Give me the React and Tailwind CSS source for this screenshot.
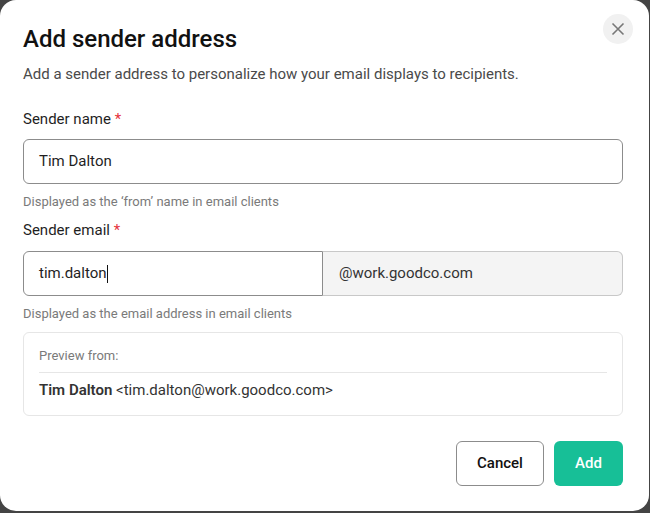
import React from 'react';

const Label = ({ children }) => (
  <div className="h-[20px] text-[15px] leading-[20px] text-[#1f1f1f]">
    {children} <span className="text-[#e5343d]">*</span>
  </div>
);

const Help = ({ children }) => (
  <div className="mt-[9px] h-[18px] text-[13px] leading-[18px] text-[#7a7a7a]">{children}</div>
);

export default function App() {
  return (
    <div className="h-[513px] w-[650px] bg-[#444444] overflow-hidden font-['Roboto',sans-serif]">
      <div className="relative h-[511px] w-[649px] rounded-[16px] bg-white pl-[23px] pr-[26px] pt-[24px]">
        <button className="absolute right-[16px] top-[14px] flex h-[30px] w-[30px] items-center justify-center rounded-full bg-[#f1f1f1]">
          <svg width="14" height="14" viewBox="0 0 14 14" fill="none" stroke="#777777" strokeWidth="1.6">
            <path d="M1.5 1.5 12.5 12.5M12.5 1.5 1.5 12.5" />
          </svg>
        </button>

        <h1 className="h-[30px] text-[24px] leading-[30px] font-medium text-[#111111]">Add sender address</h1>
        <p className="mt-[9px] h-[22px] text-[15px] leading-[22px] text-[#4a4a4a]">
          Add a sender address to personalize how your email displays to recipients.
        </p>

        <div className="mt-[24px]">
          <Label>Sender name</Label>
        </div>
        <div className="mt-[10px] flex h-[45px] items-center rounded-[6px] border border-[#8c8c8c] px-[15px] text-[15px] text-[#1f1f1f]">
          Tim Dalton
        </div>
        <Help>Displayed as the ‘from’ name in email clients</Help>

        <div className="mt-[9px]">
          <Label>Sender email</Label>
        </div>
        <div className="mt-[11px] flex h-[45px]">
          <div className="flex w-[300px] items-center rounded-l-[6px] border border-[#8c8c8c] px-[15px] text-[15px] text-[#1f1f1f]">
            tim.dalton
            <span className="h-[18px] w-px bg-[#111111]"></span>
          </div>
          <div className="flex flex-1 items-center rounded-r-[6px] border border-l-0 border-[#c8c8c8] bg-[#f4f4f4] pl-[16px] text-[15px] text-[#333333]">
            @work.goodco.com
          </div>
        </div>
        <Help>Displayed as the email address in email clients</Help>

        <div className="mt-[9px] h-[84px] rounded-[6px] border border-[#e6e6e6] px-[15px] pt-[14px]">
          <div className="h-[17px] text-[13px] leading-[17px] text-[#7a7a7a]">Preview from:</div>
          <div className="mt-[8px] border-t border-[#e6e6e6] pt-[7px] text-[15px] leading-[20px] text-[#333333]">
            <span className="font-semibold">Tim Dalton</span> &lt;tim.dalton@work.goodco.com&gt;
          </div>
        </div>

        <div className="mt-[25px] flex justify-end gap-[10px]">
          <button className="h-[45px] w-[88px] rounded-[6px] border border-[#8c8c8c] bg-white text-[15px] font-medium text-[#111111]">
            Cancel
          </button>
          <button className="h-[45px] w-[69px] rounded-[6px] bg-[#17bf97] text-[15px] font-medium text-white">
            Add
          </button>
        </div>
      </div>
    </div>
  );
}
